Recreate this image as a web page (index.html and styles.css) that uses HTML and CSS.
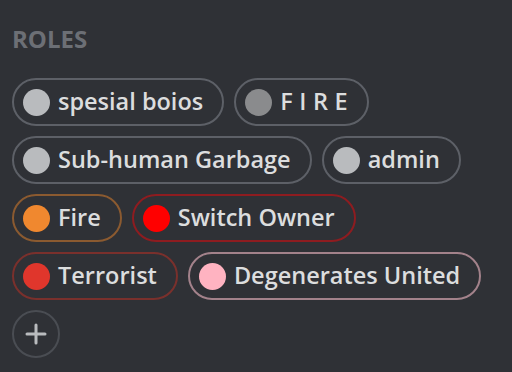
FILE: index.html
```html
<!DOCTYPE html>
<html>
<head>
<meta charset="utf-8">
<link rel="stylesheet" href="styles.css">
</head>
<body>
<section class="roles">
  <h2 class="roles-title">ROLES</h2>
  <ul class="role-list">
    <li class="role role-grey"><span class="dot"></span><span class="name">spesial boios</span></li>
    <li class="role role-fire-caps"><span class="dot"></span><span class="name">F I R E</span></li>
    <li class="role role-grey"><span class="dot"></span><span class="name">Sub-human Garbage</span></li>
    <li class="role role-grey"><span class="dot"></span><span class="name">admin</span></li>
    <li class="role role-orange"><span class="dot"></span><span class="name">Fire</span></li>
    <li class="role role-red"><span class="dot"></span><span class="name">Switch Owner</span></li>
    <li class="role role-terror"><span class="dot"></span><span class="name">Terrorist</span></li>
    <li class="role role-pink"><span class="dot"></span><span class="name">Degenerates United</span></li>
    <li class="add-role"><svg width="24" height="24" viewBox="0 0 24 24"><path d="M12 3v18M3 12h18" stroke="#b9bbbe" stroke-width="3" stroke-linecap="round"/></svg></li>
  </ul>
</section>
</body>
</html>
```
FILE: styles.css
```css
html, body {
  margin: 0;
  padding: 0;
  background: #2f3136;
  width: 512px;
  height: 372px;
  overflow: hidden;
}
.roles {
  padding: 27px 12px 0 12px;
  font-family: "Open Sans", "Noto Sans", sans-serif;
}
.roles-title {
  margin: 0 0 27px 0;
  font-size: 24px;
  font-weight: 700;
  line-height: 24px;
  color: #6c6f75;
  letter-spacing: 0;
}
.role-list {
  list-style: none;
  margin: 0;
  padding: 0;
  width: 495px;
  display: flex;
  flex-wrap: wrap;
  gap: 10px;
}
.role {
  box-sizing: border-box;
  height: 48px;
  border: 2px solid #5d6067;
  border-radius: 24px;
  display: flex;
  align-items: center;
  padding: 0 19px 0 9px;
}
.dot {
  width: 27px;
  height: 27px;
  border-radius: 50%;
  background: #b9bbbe;
  margin-right: 8px;
  flex: none;
}
.name {
  font-size: 23.5px;
  font-weight: 600;
  color: #dcddde;
  white-space: pre;
  line-height: 1;
  letter-spacing: 0;
}
.role-fire-caps .dot { background: #8a8b8d; }
.role-fire-caps .name { letter-spacing: 0.2px; }
.role-orange { border-color: #8b5a30; }
.role-orange .dot { background: #f0882f; }
.role-red { border-color: #8e1c20; }
.role-red .dot { background: #ff0000; }
.role-terror { border-color: #7a302c; }
.role-terror .dot { background: #e0362c; }
.role-pink { border-color: #a3828b; }
.role-pink .dot { background: #ffb3c1; }
.add-role {
  box-sizing: border-box;
  width: 48px;
  height: 48px;
  border: 2px solid #4a4d53;
  border-radius: 50%;
  display: flex;
  align-items: center;
  justify-content: center;
}
```
